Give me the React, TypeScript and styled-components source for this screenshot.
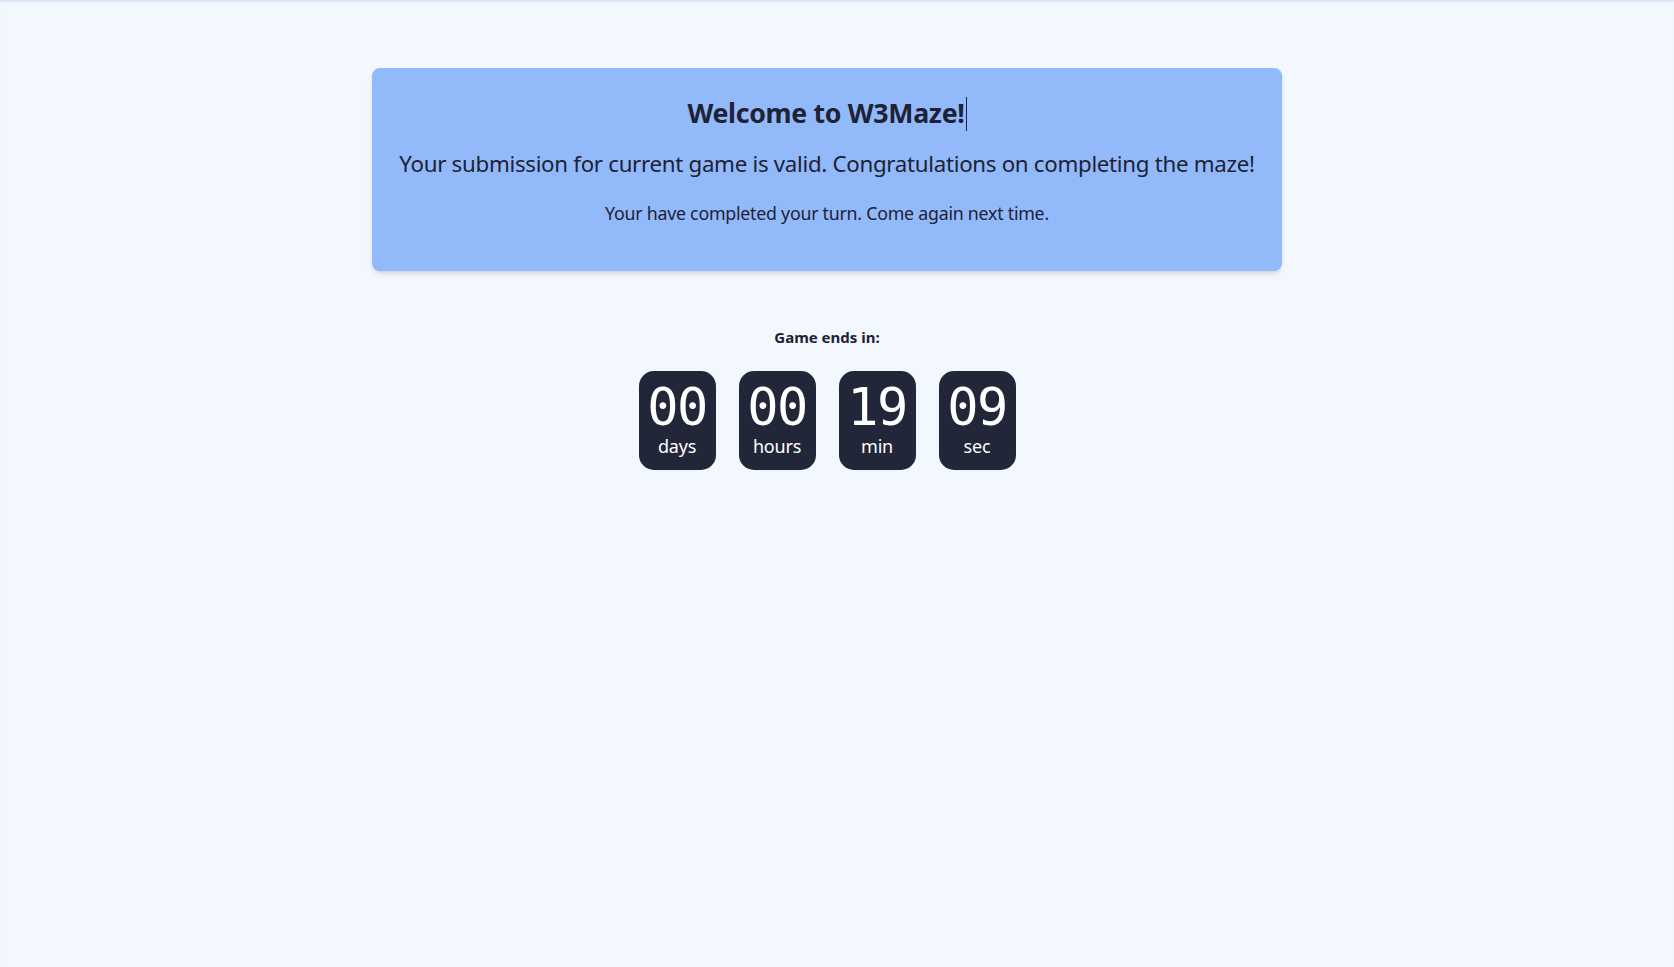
import React from 'react';
import styled, { createGlobalStyle } from 'styled-components';

const GlobalStyle = createGlobalStyle`
  html, body {
    margin: 0;
    padding: 0;
    background: #f3f7fe;
    font-family: 'Noto Sans', 'Open Sans', sans-serif;
    color: #1e2235;
  }
`;

interface TimeUnit {
  value: string;
  label: string;
}

const countdown: TimeUnit[] = [
  { value: '00', label: 'days' },
  { value: '00', label: 'hours' },
  { value: '19', label: 'min' },
  { value: '09', label: 'sec' },
];

const App: React.FC = () => {
  return (
    <Page>
      <GlobalStyle />
      <Main>
        <Banner>
          <Title>
            Welcome to W3Maze!
            <Caret />
          </Title>
          <Subtitle>
            Your submission for current game is valid. Congratulations on completing the maze!
          </Subtitle>
          <Note>Your have completed your turn. Come again next time.</Note>
        </Banner>

        <Countdown>
          <CountdownLabel>Game ends in:</CountdownLabel>
          <Tiles>
            {countdown.map((unit) => (
              <Tile key={unit.label}>
                <Digits>{unit.value}</Digits>
                <UnitLabel>{unit.label}</UnitLabel>
              </Tile>
            ))}
          </Tiles>
        </Countdown>
      </Main>
    </Page>
  );
};

const Page = styled.div`
  min-height: 967px;
  box-shadow: inset 0 3px 3px -2px rgba(160, 180, 230, 0.45);
`;

const Main = styled.main`
  display: flex;
  flex-direction: column;
  align-items: center;
  padding: 68px 20px 0 0;
`;

const Banner = styled.section`
  width: 910px;
  box-sizing: border-box;
  padding: 25px 24px 46px;
  background: #92b9f9;
  border-radius: 8px;
  box-shadow: 0 4px 6px -1px rgba(0, 0, 0, 0.1), 0 2px 4px -2px rgba(0, 0, 0, 0.1);
  text-align: center;
`;

const Title = styled.h1`
  margin: 0;
  font-size: 26.7px;
  line-height: 40px;
  font-weight: 700;
  letter-spacing: -0.3px;
`;

const Caret = styled.span`
  display: inline-block;
  width: 1px;
  height: 34px;
  margin-left: 1px;
  vertical-align: -8px;
  background: #1e2235;
`;

const Subtitle = styled.p`
  margin: 16px 0 0;
  font-size: 22.3px;
  line-height: 30px;
  letter-spacing: -0.3px;
`;

const Note = styled.p`
  margin: 22px 0 0;
  font-size: 17.8px;
  line-height: 24px;
  letter-spacing: -0.25px;
`;

const Countdown = styled.section`
  display: flex;
  flex-direction: column;
  align-items: center;
  margin-top: 55px;
`;

const CountdownLabel = styled.div`
  font-size: 15px;
  font-weight: 700;
  line-height: 22px;
`;

const Tiles = styled.div`
  display: flex;
  gap: 23px;
  margin-top: 23px;
`;

const Tile = styled.div`
  width: 77px;
  height: 99px;
  box-sizing: border-box;
  padding-top: 8px;
  display: flex;
  flex-direction: column;
  align-items: center;
  background: #222639;
  border-radius: 15px;
  color: #ffffff;
`;

const Digits = styled.div`
  font-family: 'DejaVu Sans Mono', 'Liberation Mono', monospace;
  font-size: 52px;
  line-height: 56px;
  letter-spacing: -1.5px;
`;

const UnitLabel = styled.div`
  font-size: 18px;
  line-height: 22px;
  letter-spacing: -0.2px;
`;

export default App;
